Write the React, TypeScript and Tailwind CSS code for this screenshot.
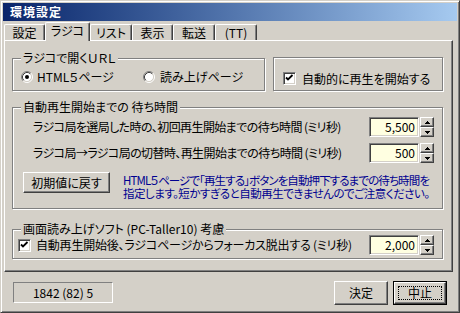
import React from "react";

const raised =
  "border border-t-white border-l-white border-r-[#404040] border-b-[#404040] shadow-[inset_-1px_-1px_0_#808080]";
const sunken =
  "border border-t-[#808080] border-l-[#808080] border-r-white border-b-white shadow-[inset_1px_1px_0_#404040,inset_-1px_-1px_0_#d4d0c8]";
const etched =
  "min-w-0 border border-[#808080] shadow-[inset_1px_1px_0_#fff,1px_1px_0_#fff]";

function Radio({ checked }: { checked?: boolean }) {
  return (
    <svg width="12" height="12" viewBox="0 0 12 12" className="shrink-0">
      <circle cx="6" cy="6" r="4.5" fill="#fff" />
      <path d="M2.11 9.89 A5.5 5.5 0 0 1 9.89 2.11" fill="none" stroke="#808080" />
      <path d="M2.11 9.89 A5.5 5.5 0 0 0 9.89 2.11" fill="none" stroke="#fff" />
      <path d="M2.82 9.18 A4.5 4.5 0 0 1 9.18 2.82" fill="none" stroke="#404040" />
      <path d="M2.82 9.18 A4.5 4.5 0 0 0 9.18 2.82" fill="none" stroke="#d4d0c8" />
      {checked && <circle cx="6" cy="6" r="2" fill="#000" />}
    </svg>
  );
}

function Check() {
  return (
    <div className={`${sunken} h-[13px] w-[13px] shrink-0 bg-white`}>
      <svg width="11" height="11" viewBox="0 0 11 11" className="block">
        <path d="M2 4.5 L4 6.5 L8.5 2" fill="none" stroke="#000" strokeWidth="1.8" />
      </svg>
    </div>
  );
}

function Spin() {
  return (
    <div className="ml-[1px] flex h-[20px] w-[14px] flex-col">
      <div className={`${raised} flex h-[10px] items-center justify-center bg-[#d4d0c8]`}>
        <svg width="5" height="3" className="block">
          <rect x="2" y="0" width="1" height="1" />
          <rect x="1" y="1" width="3" height="1" />
          <rect x="0" y="2" width="5" height="1" />
        </svg>
      </div>
      <div className={`${raised} flex h-[10px] items-center justify-center bg-[#d4d0c8]`}>
        <svg width="5" height="3" className="block">
          <rect x="0" y="0" width="5" height="1" />
          <rect x="1" y="1" width="3" height="1" />
          <rect x="2" y="2" width="1" height="1" />
        </svg>
      </div>
    </div>
  );
}

function NumBox({ value }: { value: string }) {
  return (
    <div className="ml-auto flex shrink-0 items-center">
      <div
        className={`${sunken} flex h-[20px] w-[50px] items-center justify-end bg-[#ffffe1] pr-[3px]`}
      >
        {value}
      </div>
      <Spin />
    </div>
  );
}

function Tab({ className, children }: { className: string; children: React.ReactNode }) {
  return (
    <div
      className={`flex items-center justify-center rounded-t-[2px] border-t border-l border-r border-t-white border-l-white border-r-[#404040] shadow-[inset_-1px_0_0_#808080] ${className}`}
    >
      {children}
    </div>
  );
}

export default function App() {
  return (
    <div className="h-[313px] w-[460px] overflow-hidden border border-t-[#d4d0c8] border-l-[#d4d0c8] border-r-[#404040] border-b-[#404040] bg-[#d4d0c8] p-[2px] text-[12px] leading-[12px] text-black shadow-[inset_1px_1px_0_#fff,inset_-1px_-1px_0_#808080] [font-family:'Noto_Sans_CJK_JP',sans-serif] [font-feature-settings:'palt']">
      <div className="flex h-full flex-col">
        <div className="flex h-[18px] items-center bg-linear-to-r from-[#0a246a] to-[#a6caf0] pl-[7px] font-bold tracking-[1px] text-white">
          環境設定
        </div>

        <div className="flex h-[19px] items-end pl-[1px]">
          <Tab className="h-[16px] w-[41px]">設定</Tab>
          <Tab className="relative z-10 -mb-px h-[19px] w-[45px] bg-[#d4d0c8] pb-[2px]">ラジコ</Tab>
          <Tab className="h-[16px] w-[42px]">リスト</Tab>
          <Tab className="h-[16px] w-[41px]">表示</Tab>
          <Tab className="h-[16px] w-[42px]">転送</Tab>
          <Tab className="h-[16px] w-[42px]">(TT)</Tab>
        </div>

        <div className="ml-[1px] h-[232px] w-[449px] overflow-hidden border border-t-white border-l-white border-r-[#404040] border-b-[#404040] pt-[11px] pl-[7px] shadow-[inset_-1px_-1px_0_#808080]">
          <div className="flex items-start">
            <fieldset className={`${etched} h-[39px] w-[253px] px-0`}>
              <legend className="ml-[8px] bg-[#d4d0c8] px-[2px] leading-[12px]">ラジコで開くＵＲＬ</legend>
              <div className="flex items-center pt-[7px] pl-[8px]">
                <div className="flex w-[122px] items-center gap-[4px]">
                  <Radio checked />
                  <span>HTML５ページ</span>
                </div>
                <div className="flex items-center gap-[5px]">
                  <Radio />
                  <span>読み上げページ</span>
                </div>
              </div>
            </fieldset>
            <div className={`${etched} mt-[5px] ml-[8px] h-[34px] w-[170px] pt-[14px] pl-[9px]`}>
              <div className="flex items-center gap-[6px]">
                <Check />
                <span>自動的に再生を開始する</span>
              </div>
            </div>
          </div>

          <fieldset className={`${etched} mt-[10px] h-[108px] w-[431px] px-0`}>
            <legend className="ml-[8px] bg-[#d4d0c8] px-[2px] leading-[12px]">自動再生開始までの 待ち時間</legend>
            <div className="mt-[4px] flex h-[20px] items-center pr-[8px] pl-[20px]">
              <span className="tracking-[-0.6px] whitespace-nowrap">ラジコ局を選局した時の、初回再生開始までの待ち時間 (ミリ秒)</span>
              <NumBox value="5,500" />
            </div>
            <div className="mt-[6px] flex h-[20px] items-center pr-[8px] pl-[20px]">
              <span className="tracking-[-0.6px] whitespace-nowrap">ラジコ局→ラジコ局の切替時、再生開始までの待ち時間 (ミリ秒)</span>
              <NumBox value="500" />
            </div>
            <div className="mt-[9px] flex items-start pl-[10px]">
              <div className={`${raised} flex h-[21px] w-[87px] shrink-0 items-center justify-center`}>初期値に戻す</div>
              <div className="mt-[2px] ml-[13px] text-[11.5px] leading-[13px] whitespace-nowrap tracking-[-0.5px] text-[#000090]">
                <div className="tracking-[-0.9px]">HTML５ページで｢再生する｣ボタンを自動押下するまでの待ち時間を</div>
                <div>指定します。短かすぎると自動再生できませんのでご注意ください。</div>
              </div>
            </div>
          </fieldset>

          <fieldset className={`${etched} mt-[14px] h-[36px] w-[431px] px-0`}>
            <legend className="ml-[8px] bg-[#d4d0c8] px-[2px] leading-[12px]">画面読み上げソフト (PC-Taller10) 考慮</legend>
            <div className="flex h-[20px] items-center pr-[8px] pl-[5px]">
              <Check />
              <span className="ml-[5px] tracking-[-0.2px] whitespace-nowrap">自動再生開始後、ラジコページからフォーカス脱出する (ミリ秒)</span>
              <NumBox value="2,000" />
            </div>
          </fieldset>
        </div>

        <div className="flex items-start">
          <div className="mt-[10px] ml-[10px] flex h-[21px] w-[100px] items-center justify-center border border-t-[#808080] border-l-[#808080] border-r-white border-b-white">
            1842 (82) 5
          </div>
          <div className="mt-[9px] mr-[10px] ml-auto flex gap-[5px]">
            <div className={`${raised} flex h-[24px] w-[54px] items-center justify-center`}>決定</div>
            <div className="h-[24px] w-[54px] border border-black">
              <div className={`${raised} flex h-full w-full items-center justify-center p-[3px]`}>
                <div className="flex h-full w-full items-center justify-center border border-dotted border-black">
                  中止
                </div>
              </div>
            </div>
          </div>
        </div>
      </div>
    </div>
  );
}
